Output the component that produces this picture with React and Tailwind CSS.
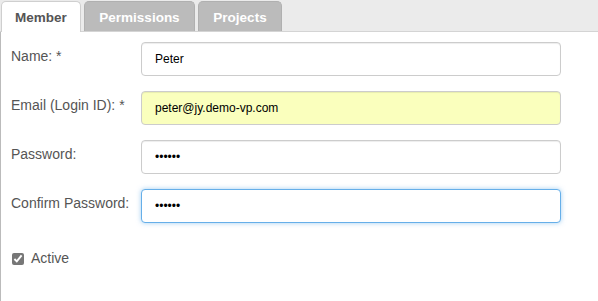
import { useState } from 'react';

const FIELDS = [
  { id: 'name', label: 'Name: *', type: 'text', value: 'Peter' },
  { id: 'email', label: 'Email (Login ID): *', type: 'text', value: 'peter@jy.demo-vp.com', autofill: true },
  { id: 'password', label: 'Password:', type: 'password', value: 'secret' },
  { id: 'confirm', label: 'Confirm Password:', type: 'password', value: 'secret', focused: true },
];

const TABS = [
  { name: 'Member', width: 'w-[80px]' },
  { name: 'Permissions', width: 'w-[111px]' },
  { name: 'Projects', width: 'w-[84px]' },
];

export default function App() {
  const [active, setActive] = useState('Member');
  const [values, setValues] = useState(() => {
    const v = {};
    FIELDS.forEach(f => { v[f.id] = f.value; });
    return v;
  });
  const [isActive, setIsActive] = useState(true);

  return (
    <div className="w-[598px] h-[301px] bg-white overflow-hidden font-['Liberation_Sans',Arial,sans-serif] text-[14px] text-[#555]">
      <div className="flex items-end h-[32px] bg-[#ebebeb] border-b border-[#d4d4d4] pl-px gap-[3px]">
        {TABS.map(tab => (
          <button
            key={tab.name}
            onClick={() => setActive(tab.name)}
            className={
              tab.width + ' ' +
              (tab.name === active
                ? 'h-[31px] -mb-px pt-[2px] bg-white border border-b-0 border-[#cfcfcf] rounded-t-[5px] font-bold text-[#555] text-[13.5px]'
                : 'h-[30px] pt-[3px] bg-[#bbbbbb] border border-b-0 border-[#b0b0b0] rounded-t-[5px] font-bold text-white text-[13.5px]')
            }
          >
            {tab.name}
          </button>
        ))}
      </div>

      <div className="border-l border-[#bbb] h-[269px] pl-[10px] pt-[10px]">
        <div className="flex flex-col gap-[15px]">
          {FIELDS.map(f => (
            <div key={f.id} className="flex items-center h-[34px]">
              <label className="w-[130px] pb-[6px]">{f.label}</label>
              <input
                type={f.type}
                value={values[f.id]}
                onChange={e => setValues(prev => ({ ...prev, [f.id]: e.target.value }))}
                className={
                  'w-[420px] h-[34px] px-[13px] rounded-[4px] border text-[12px] text-black outline-none ' +
                  (f.autofill ? 'bg-[#faffbd] border-[#ccc] ' : 'bg-white ') +
                  (f.focused
                    ? 'border-[#66afe9] shadow-[0_0_5px_rgba(102,175,233,0.6)]'
                    : 'border-[#ccc] shadow-[inset_0_1px_1px_rgba(0,0,0,0.075)]')
                }
              />
            </div>
          ))}
        </div>

        <label className="flex items-center gap-[7px] mt-[25px] ml-px">
          <input
            type="checkbox"
            checked={isActive}
            onChange={e => setIsActive(e.target.checked)}
            className="w-[12px] h-[12px] accent-[#777]"
          />
          <span>Active</span>
        </label>
      </div>
    </div>
  );
}
